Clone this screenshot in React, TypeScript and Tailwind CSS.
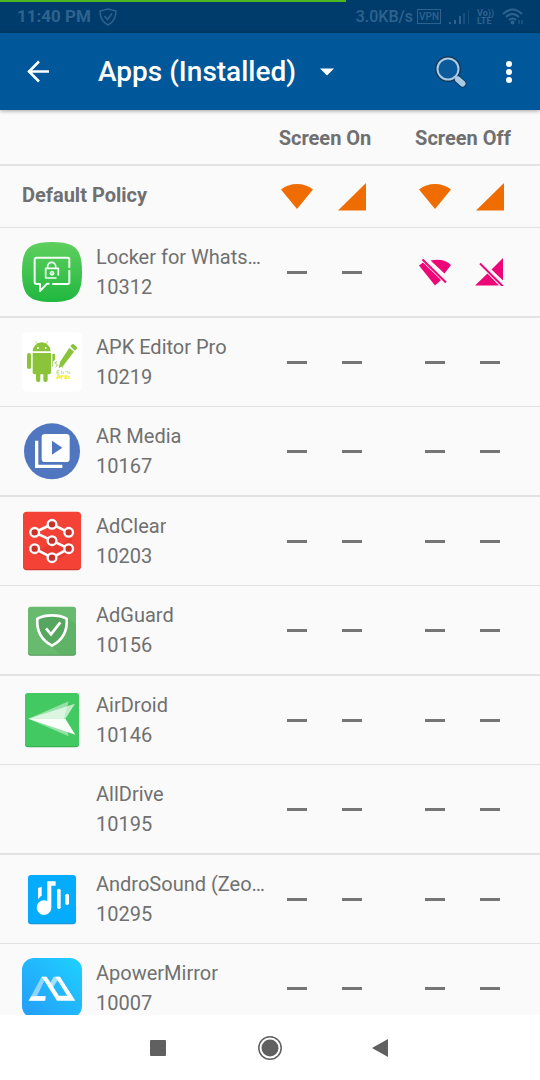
import type { ReactNode } from "react";

type Policy = "none" | "blocked";

interface AppEntry {
  name: string;
  uid: number;
  icon: ReactNode;
  screenOff?: Policy;
}

const iconBox = "block size-[60px]";

function LockerIcon() {
  return (
    <svg viewBox="66 381 180 180" className={iconBox} aria-hidden="true">
      <defs>
        <linearGradient id="locker" x1="0" y1="0" x2="0" y2="1">
          <stop offset="0" stopColor="#5fcf5f" />
          <stop offset="1" stopColor="#20b83f" />
        </linearGradient>
      </defs>
      <path d="M156 381C226 381 246 401 246 471S226 561 156 561 66 541 66 471 86 381 156 381Z" fill="url(#locker)" />
      <g fill="none" stroke="#f4fff4" strokeWidth="6" strokeLinecap="round" strokeLinejoin="round">
        <path d="M208 457V433Q208 428 203 428H110Q104 428 104 434V501Q104 507 110 507H120V528L141 506H146" />
        <path d="M159 507H203Q208 507 208 502V467" />
        <path d="M143 459V454A12 12 0 0 1 167 454V459" strokeWidth="5" />
        <path d="M168 489H137V460H175V480" strokeWidth="5" />
      </g>
      <circle cx="156" cy="475" r="7" fill="#f4fff4" />
      <circle cx="156" cy="474" r="2" fill="#38bd4c" />
    </svg>
  );
}

function ApkEditorIcon() {
  return (
    <svg viewBox="66 51 180 180" className={iconBox} aria-hidden="true">
      <rect x="66" y="52" width="180" height="178" rx="14" fill="#fff" />
      <g fill="#8bc33a">
        <path d="M98 109A27 27 0 0 1 152 109Z" />
        <path d="M98 114H153V172Q153 178 147 178H104Q98 178 98 172Z" />
        <rect x="81" y="114" width="12" height="48" rx="6" />
        <path d="M157 120Q157 116 161 116Q165 116 165 120V134L159 140V155H157Z" />
        <rect x="108" y="170" width="13" height="31" rx="6" />
        <rect x="130" y="170" width="13" height="31" rx="6" />
        <path d="M107 79L114 90M143 79L136 90" stroke="#8bc33a" strokeWidth="2" />
        <path d="M208 98L222 110 191 151 176 160 180 141ZM211 94L216 88Q219 86 223 89L230 95Q233 98 230 102L225 107Z" />
        <path d="M162 143L171 138 169 147 176 150 164 160 170 150ZM180 149L188 160 191 151Z" opacity=".7" />
      </g>
      <circle cx="114" cy="99" r="3" fill="#fff" />
      <circle cx="137" cy="99" r="3" fill="#fff" />
      <path d="M171 167V177M171 167H179M171 172H177M171 177H179M185 167V177M190 170V177M196 170H204V177M209 170V177" stroke="#a7cf6b" strokeWidth="2" fill="none" />
      <path d="M171 183H179V188H171V193M184 193V183H190M195 183H201V191H195ZM207 183V192" stroke="#f4ee2b" strokeWidth="4" fill="none" />
    </svg>
  );
}

function ArMediaIcon() {
  return (
    <svg viewBox="66 318 180 180" className={iconBox} aria-hidden="true">
      <circle cx="156" cy="409" r="84" fill="#5076c0" />
      <path d="M110 377V454H187" fill="none" stroke="#fff" strokeWidth="10" />
      <rect x="125" y="357" width="84" height="84" rx="10" fill="#fff" />
      <path d="M156 377V419L187 398Z" fill="#5076c0" />
    </svg>
  );
}

const adClearNodes = [
  [104, 112],
  [156, 88],
  [206, 112],
  [156, 137],
  [104, 161],
  [206, 161],
  [156, 188],
];

function AdClearIcon() {
  return (
    <svg viewBox="66 48 180 180" className={iconBox} aria-hidden="true">
      <rect x="69" y="52" width="174" height="174" rx="12" fill="#c9352c" />
      <rect x="69" y="50" width="174" height="173" rx="12" fill="#f44336" />
      <path d="M94 122L145 147 190 145 217 121 214 146 190 150 214 172 165 197 94 171 120 165 145 150Z" fill="#c92e25" opacity=".35" />
      <path d="M206 112L156 88 104 112 156 137 206 161 156 188 104 161" fill="none" stroke="#fff" strokeWidth="8" />
      {adClearNodes.map(([x, y]) => (
        <circle key={`${x}-${y}`} cx={x} cy={y} r="13" fill="#c93029" stroke="#fff" strokeWidth="7" />
      ))}
    </svg>
  );
}

function AdGuardIcon() {
  return (
    <svg viewBox="66 315 180 180" className={iconBox} aria-hidden="true">
      <rect x="84" y="338" width="144" height="144" rx="9" fill="#4c9254" />
      <rect x="84" y="335" width="144" height="144" rx="9" fill="#68bb6e" />
      <path d="M203 365L228 390V470Q228 479 219 479H180L155 455Z" fill="#4f9e58" opacity=".3" />
      <path d="M156 361Q181 361 200 371Q204 427 156 452Q108 427 112 371Q131 361 156 361Z" fill="#56a660" stroke="#fff" strokeWidth="8" strokeLinejoin="round" />
      <path d="M138 400L153 418 181 382" fill="none" stroke="#fff" strokeWidth="8" />
    </svg>
  );
}

function AirDroidIcon() {
  return (
    <svg viewBox="66 45 180 180" className={iconBox} aria-hidden="true">
      <rect x="75" y="56" width="162" height="161" rx="9" fill="#35aa50" />
      <rect x="75" y="54" width="162" height="160" rx="9" fill="#43c961" />
      <path d="M85 131L206 79 191 131 206 184Z" fill="#fff" opacity=".45" />
      <path d="M85 131L225 86 196 131Z" fill="#fff" opacity=".65" />
      <path d="M85 131H196L226 179Z" fill="#fff" opacity=".95" />
    </svg>
  );
}

function AndroSoundIcon() {
  return (
    <svg viewBox="66 42 180 180" className={iconBox} aria-hidden="true">
      <rect x="84" y="62" width="144" height="146" rx="10" fill="#1a92d0" />
      <rect x="84" y="60" width="144" height="145" rx="10" fill="#05acfb" />
      <g fill="#fff">
        <path d="M142 79H167V92H154V158A22 22 0 1 1 142 138Z" />
        <path d="M114 99L125 95V121L114 133Z" />
        <rect x="171" y="101" width="11" height="61" rx="5" />
        <rect x="196" y="116" width="11" height="34" rx="5" />
      </g>
    </svg>
  );
}

function ApowerMirrorIcon() {
  return (
    <svg viewBox="66 309 180 180" className={iconBox} aria-hidden="true">
      <defs>
        <linearGradient id="apower" x1="0" y1="1" x2="1" y2="0">
          <stop offset="0" stopColor="#259bf8" />
          <stop offset="1" stopColor="#1ed1ff" />
        </linearGradient>
      </defs>
      <rect x="66" y="309" width="180" height="180" rx="36" fill="url(#apower)" />
      <path d="M125 365H139L111 423H137V437H86Z" fill="#8ed6ff" />
      <path d="M161 365H180L157 400 149 386Z" fill="#a8e1ff" />
      <path d="M125 365H140L177 422H202L166 365H180L226 437H171L132 376ZM94 424H137L134 437H86Z" fill="#fff" />
    </svg>
  );
}

const apps: AppEntry[] = [
  { name: "Locker for Whats…", uid: 10312, icon: <LockerIcon />, screenOff: "blocked" },
  { name: "APK Editor Pro", uid: 10219, icon: <ApkEditorIcon /> },
  { name: "AR Media", uid: 10167, icon: <ArMediaIcon /> },
  { name: "AdClear", uid: 10203, icon: <AdClearIcon /> },
  { name: "AdGuard", uid: 10156, icon: <AdGuardIcon /> },
  { name: "AirDroid", uid: 10146, icon: <AirDroidIcon /> },
  { name: "AllDrive", uid: 10195, icon: null },
  { name: "AndroSound (Zeo…", uid: 10295, icon: <AndroSoundIcon /> },
  { name: "ApowerMirror", uid: 10007, icon: <ApowerMirrorIcon /> },
];

function WifiAllowed() {
  return (
    <svg viewBox="0 0 32 28" className="h-7 w-8" fill="#ef6c00" aria-hidden="true">
      <path d="M0 6.500Q7 1 16 1T32 6.500L16 26Z" />
    </svg>
  );
}

function MobileAllowed() {
  return (
    <svg viewBox="0 0 32 28" className="h-7 w-8" fill="#ef6c00" aria-hidden="true">
      <path d="M2 27.500H30V0Z" />
    </svg>
  );
}

function WifiBlocked() {
  return (
    <svg viewBox="0 0 32 28" className="h-7 w-8" fill="#ec0677" aria-hidden="true">
      <path d="M11.500 2.500Q25 0 32 7L25.500 15.500ZM0 7.500L4 4.500 22 22 16 27.500Z" />
      <path d="M3.500 1.500L27 24.500" stroke="#ec0677" strokeWidth="2" />
    </svg>
  );
}

function MobileBlocked() {
  return (
    <svg viewBox="0 0 32 28" className="h-7 w-8" fill="#ec0677" aria-hidden="true">
      <path d="M29 0V22.500L17.500 11.500ZM13.500 15.500L25 27.500H1Z" />
      <path d="M6 5.500L29 28.500" stroke="#ec0677" strokeWidth="2" />
    </svg>
  );
}

function PolicyButton({ label, children }: { label: string; children?: ReactNode }) {
  return (
    <button type="button" aria-label={label} className="mx-auto flex h-12 w-full items-center justify-center">
      {children ?? <span className="h-[3px] w-5 bg-[#757575]" />}
    </button>
  );
}

function StatusBar() {
  return (
    <div className="relative flex h-[33px] shrink-0 items-center justify-between bg-[#003c6b] pr-[17px] pl-[17px] text-[#2f638f]">
      <div className="absolute top-0 left-0 h-[2px] w-[64%] bg-[#4cb81f]" />
      <div className="flex items-center gap-2">
        <span className="text-[17px] font-bold">11:40 PM</span>
        <svg viewBox="0 0 18 18" className="size-[18px]" fill="none" stroke="currentColor" strokeWidth="1.500" aria-hidden="true">
          <path d="M9 1Q13 2 17 3Q17 13 9 17Q1 13 1 3Q5 2 9 1Z" />
          <path d="M5.500 8L8.500 11.500 13 5.500" />
        </svg>
      </div>
      <div className="flex items-center">
        <span className="text-base font-medium">3.0KB/s</span>
        <span className="ml-1 flex h-[15px] items-center border border-current px-px text-[10px] font-medium">VPN</span>
        <svg viewBox="0 0 20 16" className="ml-2 h-4 w-5" fill="currentColor" aria-hidden="true">
          <path d="M0 13h2v2H0zM5 11h2v4H5zM10 7h2v8h-2z" />
          <path d="M14 4h2v11h-2zM19 1h1v14h-1z" opacity=".5" />
        </svg>
        <span className="ml-2 flex w-[17px] flex-col text-[9px] leading-[8px] font-bold">
          <span>Vo))</span>
          <span>LTE</span>
        </span>
        <svg viewBox="0 0 21 17" className="ml-2 h-[17px] w-[21px]" fill="none" stroke="currentColor" strokeWidth="2" aria-hidden="true">
          <path d="M1 6Q10.500 -3 20 6M4 9Q10.500 3 17 9M7 12Q10.500 9 14 12" />
          <circle cx="10.500" cy="14.500" r="1" />
          <path d="M17 12v4M20 12v4" strokeWidth="1" />
        </svg>
      </div>
    </div>
  );
}

function AppBar() {
  return (
    <header className="relative z-10 flex h-[77px] shrink-0 items-center bg-[#005799] text-white shadow-[0_1px_4px_rgba(0,0,0,0.35)]">
      <button type="button" aria-label="Back" className="ml-3 flex size-[52px] items-center justify-center">
        <svg viewBox="0 0 24 24" className="size-6" fill="none" stroke="currentColor" strokeWidth="2.500" aria-hidden="true">
          <path d="M13 1.500L3 11.500 13 21.500M2 11.500H23" />
        </svg>
      </button>
      <button type="button" className="ml-[34px] flex items-center gap-6">
        <span className="text-[28px] leading-8 font-medium">Apps (Installed)</span>
        <svg viewBox="0 0 14 8" className="h-2 w-[14px]" fill="currentColor" aria-hidden="true">
          <path d="M0 0.500H14L7 7.500Z" />
        </svg>
      </button>
      <button type="button" aria-label="Search" className="ml-auto flex size-12 items-center justify-center">
        <svg viewBox="0 0 34 34" className="size-[34px]" fill="none" aria-hidden="true">
          <path d="M20 20L25 25" stroke="#17395a" strokeWidth="5" />
          <path d="M23.500 24L28.500 28.500" stroke="#17395a" strokeWidth="8" strokeLinecap="round" />
          <circle cx="14" cy="14" r="10.500" stroke="#17395a" strokeWidth="5" />
          <circle cx="14" cy="14" r="10.500" fill="#0b5b9b" stroke="#a9cbe6" strokeWidth="2" />
          <path d="M21 21L25 25" stroke="#a9cbe6" strokeWidth="2" />
          <path d="M24 24.500L28.500 28.500" stroke="#a9cbe6" strokeWidth="6" strokeLinecap="round" />
        </svg>
      </button>
      <button type="button" aria-label="More options" className="mr-2 ml-[11px] flex h-12 w-[46px] items-center justify-center">
        <svg viewBox="0 0 6 22" className="h-[22px] w-[6px]" fill="currentColor" aria-hidden="true">
          <circle cx="3" cy="3" r="3" />
          <circle cx="3" cy="11" r="3" />
          <circle cx="3" cy="19" r="3" />
        </svg>
      </button>
    </header>
  );
}

function AppRow({ app, thick }: { app: AppEntry; thick: boolean }) {
  const blocked = app.screenOff === "blocked";
  return (
    <tr className={thick ? "h-[90px] *:border-b-2" : "h-[89px] *:border-b"}>
      <th scope="row" className="border-[#e2e2e2] pl-[22px] text-left font-normal">
        <div className="flex items-center gap-[14px]">
          <div className="size-[60px] shrink-0">{app.icon}</div>
          <div className="min-w-0 leading-[30px]">
            <div className="truncate">{app.name}</div>
            <div>{app.uid}</div>
          </div>
        </div>
      </th>
      <td className="border-[#e2e2e2]">
        <PolicyButton label={`${app.name}: Wi-Fi, screen on`} />
      </td>
      <td className="border-[#e2e2e2]">
        <PolicyButton label={`${app.name}: mobile data, screen on`} />
      </td>
      <td className="border-[#e2e2e2] pl-7">
        <PolicyButton label={`${app.name}: Wi-Fi, screen off`}>{blocked ? <WifiBlocked /> : undefined}</PolicyButton>
      </td>
      <td className="border-[#e2e2e2]">
        <PolicyButton label={`${app.name}: mobile data, screen off`}>{blocked ? <MobileBlocked /> : undefined}</PolicyButton>
      </td>
      <td className="border-[#e2e2e2]" />
    </tr>
  );
}

function PolicyTable() {
  return (
    <table className="w-full table-fixed border-separate border-spacing-0 text-xl text-[#707070]">
      <colgroup>
        <col />
        <col className="w-[55px]" />
        <col className="w-[55px]" />
        <col className="w-[83px]" />
        <col className="w-[55px]" />
        <col className="w-[22px]" />
      </colgroup>
      <thead>
        <tr className="h-14 font-bold *:border-b-2 *:border-[#e2e2e2]">
          <td />
          <th scope="colgroup" colSpan={2} className="pt-[2px]">Screen On</th>
          <th scope="colgroup" colSpan={2} className="pt-[2px] pl-7">Screen Off</th>
          <td />
        </tr>
      </thead>
      <tbody>
        <tr className="h-[62px] *:border-b *:border-[#e2e2e2]">
          <th scope="row" className="pb-1 pl-[22px] text-left font-bold">Default Policy</th>
          <td>
            <PolicyButton label="Default: Wi-Fi, screen on"><WifiAllowed /></PolicyButton>
          </td>
          <td>
            <PolicyButton label="Default: mobile data, screen on"><MobileAllowed /></PolicyButton>
          </td>
          <td className="pl-7">
            <PolicyButton label="Default: Wi-Fi, screen off"><WifiAllowed /></PolicyButton>
          </td>
          <td>
            <PolicyButton label="Default: mobile data, screen off"><MobileAllowed /></PolicyButton>
          </td>
          <td />
        </tr>
        {apps.map((app, index) => (
          <AppRow key={app.uid} app={app} thick={index % 2 === 0} />
        ))}
      </tbody>
    </table>
  );
}

function NavigationBar() {
  return (
    <nav className="flex h-[65px] shrink-0 items-center justify-center bg-white text-[#606060]">
      <button type="button" aria-label="Recent apps" className="flex h-12 w-[110px] items-center justify-center pr-1">
        <span className="size-4 rounded-[1px] bg-current" />
      </button>
      <button type="button" aria-label="Home" className="flex h-12 w-[110px] items-center justify-center">
        <svg viewBox="0 0 24 24" className="size-6" aria-hidden="true">
          <circle cx="12" cy="12" r="11.200" fill="none" stroke="currentColor" strokeWidth="1.500" />
          <circle cx="12" cy="12" r="8.500" fill="currentColor" />
        </svg>
      </button>
      <button type="button" aria-label="Back" className="flex h-12 w-[110px] items-center justify-center">
        <svg viewBox="0 0 16 18" className="h-[18px] w-4" fill="currentColor" aria-hidden="true">
          <path d="M0 9L16 0V18Z" />
        </svg>
      </button>
    </nav>
  );
}

export default function App() {
  return (
    <div className="flex h-screen flex-col bg-[#fafafa] font-['Roboto',sans-serif]">
      <StatusBar />
      <AppBar />
      <main className="min-h-0 flex-1 overflow-y-auto [scrollbar-width:none]">
        <PolicyTable />
      </main>
      <NavigationBar />
    </div>
  );
}
